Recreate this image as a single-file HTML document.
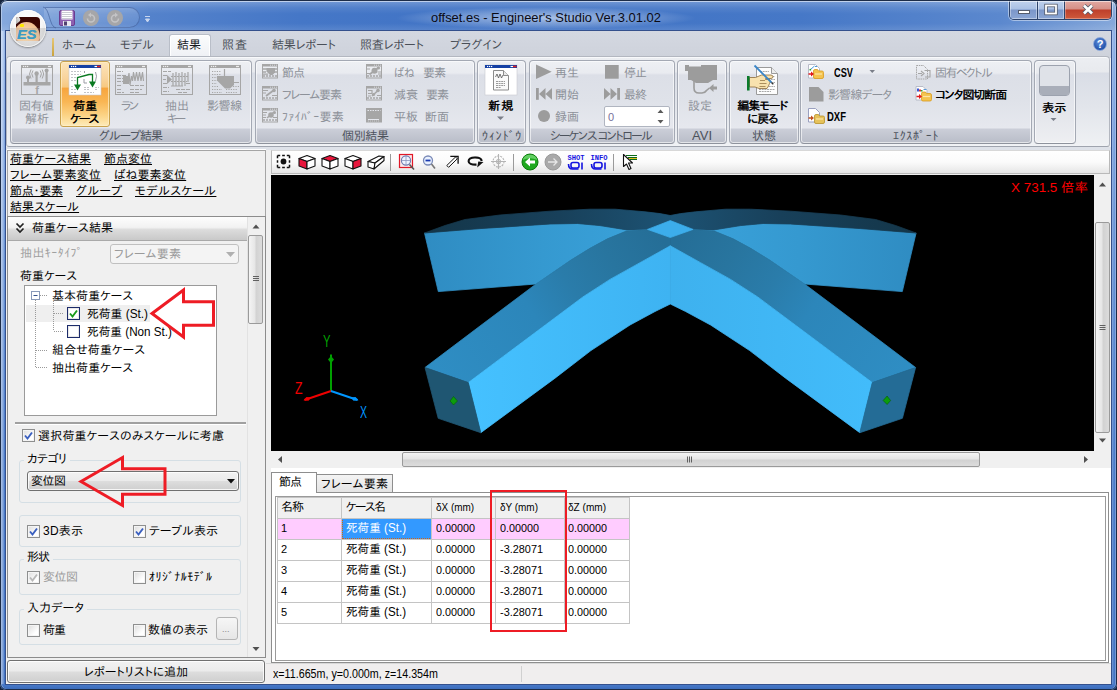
<!DOCTYPE html>
<html lang="ja">
<head>
<meta charset="utf-8">
<title>offset.es - Engineer's Studio Ver.3.01.02</title>
<style>
*{box-sizing:border-box;margin:0;padding:0}
html,body{width:1117px;height:690px;overflow:hidden;background:#16243c}
body{font-family:"Liberation Sans","IPAPGothic","IPAGothic","Noto Sans CJK JP",sans-serif;font-size:12px;color:#000;line-height:1}
.a{position:absolute}
.t{position:absolute;white-space:nowrap;line-height:14px;height:14px}
svg{position:absolute;overflow:visible}
#win{position:absolute;left:0;top:0;width:1117px;height:690px;border-radius:7px 7px 6px 6px;overflow:hidden;
 background:linear-gradient(90deg,#86a9dd 0,#6e96d5 60px,#5482cb 150px,#4577c7 300px,#4073c5 520px,#4678c7 800px,#5b88ce 1000px,#86a8da 1117px)}
#winedge{position:absolute;left:0;top:0;width:1117px;height:690px;border:1px solid #1c2c48;border-radius:7px 7px 6px 6px;box-shadow:inset 0 1px 0 rgba(255,255,255,.55),inset 1px 0 0 rgba(255,255,255,.35),inset -1px 0 0 rgba(255,255,255,.25);pointer-events:none}
.grp{position:absolute;top:60px;height:84px;border:1px solid #a4a9b4;border-bottom-color:#8e939d;border-radius:4px;background:linear-gradient(#eef0f4 0,#e9ebf0 12px,#dcdfe7 14px,#dfe2e9 40px,#e6e8ee 67px,#cbced8 68px,#b9bdc8 100%);box-shadow:inset 0 0 0 1px rgba(255,255,255,.6)}
.dis{color:#8d9199}
.u{text-decoration:underline}
.cb{position:absolute;width:13px;height:13px;border:1px solid #8e8f8f;background:linear-gradient(135deg,#dcdcdc,#fff 70%);box-shadow:inset 0 0 0 1px #f4f4f4}
.gb{position:absolute;border:1px solid #d5dfe5;border-radius:3px}
</style>
</head>
<body>
<div id="win">
<div class="a" style="left:1px;top:31px;width:5px;height:653px;background:linear-gradient(90deg,rgba(255,255,255,.15) 0,rgba(255,255,255,.4) 35%,rgba(255,255,255,0) 70%),linear-gradient(#9dbbea 0,#6f98d8 30%,#4c7cca 65%,#4475c4 100%)"></div>
<div class="a" style="left:1111px;top:31px;width:5px;height:653px;background:linear-gradient(90deg,rgba(255,255,255,.45) 0,rgba(255,255,255,.1) 40%,rgba(255,255,255,0) 70%),linear-gradient(#8fb0e6 0,#6a94d6 30%,#4c7cca 65%,#4475c4 100%)"></div>
<div class="a" style="left:1px;top:684px;width:1115px;height:5px;background:linear-gradient(#4a7ccb,#3b6cbb)"></div>
<div class="a" style="left:6px;top:31px;width:1105px;height:653px;background:#f0f0f0"></div>
<div class="a" style="left:0;top:0;width:1117px;height:31px;background:linear-gradient(rgba(255,255,255,.28) 0,rgba(255,255,255,.08) 25%,rgba(255,255,255,0) 45%,rgba(255,255,255,0) 75%,rgba(255,255,255,.12) 100%)"></div>
<div class="a" style="left:300px;top:3px;width:500px;height:26px;background:radial-gradient(ellipse 150px 11px at 246px 15px,rgba(255,255,255,.55),rgba(255,255,255,.25) 60%,rgba(255,255,255,0) 100%)"></div>
<div class="t" style="left:431px;top:11px;font-size:13px;color:#0a0a14;transform:scaleX(0.994);transform-origin:0 50%;">offset.es - Engineer's Studio Ver.3.01.02</div>
<div class="a" style="left:44px;top:7px;width:96px;height:21px;border:1px solid rgba(60,90,150,.55);border-radius:2px 11px 11px 2px;background:linear-gradient(rgba(255,255,255,.18),rgba(255,255,255,.05));border-left-color:transparent"></div>
<svg style="left:40px;top:5px" width="110" height="26" viewBox="0 0 110 26">
  <path d="M3 2 C10 3 9 22 16 23" fill="none" stroke="rgba(60,90,150,.6)" stroke-width="1"/>
  <rect x="19.5" y="5.500" width="15" height="15" rx="1.500" fill="#8e5fb0" stroke="#6a3d90"/>
  <rect x="21.500" y="5.500" width="11" height="9" fill="#fff"/>
  <path d="M22 7.500h10M22 9.500h10M22 11.500h10M22 13.500h10" stroke="#b4b4c0" stroke-width=".7"/>
  <rect x="23" y="16" width="8" height="5" fill="#e8e8f0"/><rect x="24" y="16.500" width="3" height="4" fill="#514070"/>
  <circle cx="51" cy="13" r="8" fill="#a6a6a8"/><circle cx="75" cy="13" r="8" fill="#a6a6a8"/>
  <path d="M47.500 13.500a3.500 3.500 0 1 0 3.500-3.500" fill="none" stroke="#c4c4c6" stroke-width="1.600"/><path d="M51 7.500l-3 2.500 3 2.500z" fill="#c4c4c6"/>
  <path d="M78.500 13.500a3.500 3.500 0 1 1-3.500-3.500" fill="none" stroke="#c4c4c6" stroke-width="1.600"/><path d="M75 7.500l3 2.500-3 2.500z" fill="#c4c4c6"/>
  <path d="M105 11.500h5M105.500 14h4l-2 3z" stroke="#c8d6ee" stroke-width="1" fill="#c8d6ee"/>
 </svg>
<div class="a" style="left:1009px;top:0;width:103px;height:20px;border:1px solid #2d436b;border-top:none;border-radius:0 0 5px 5px;overflow:hidden;box-shadow:0 0 0 1px rgba(255,255,255,.45)">
  <div class="a" style="left:0;top:0;width:28px;height:19px;background:linear-gradient(#c3d4ee 0,#a9c0e4 48%,#7b96c9 52%,#8ba6d4 100%);border-right:1px solid #2d436b;box-shadow:inset 0 0 0 1px rgba(255,255,255,.4)"></div>
  <div class="a" style="left:28px;top:0;width:27px;height:19px;background:linear-gradient(#c3d4ee 0,#a9c0e4 48%,#7b96c9 52%,#8ba6d4 100%);border-right:1px solid #2d436b;box-shadow:inset 0 0 0 1px rgba(255,255,255,.4)"></div>
  <div class="a" style="left:55px;top:0;width:47px;height:19px;background:linear-gradient(#e3aca6 0,#d68f86 48%,#bd3f2b 52%,#cf5a3c 100%);box-shadow:inset 0 0 0 1px rgba(255,255,255,.3)"></div>
  <svg style="left:0;top:0" width="102" height="19" viewBox="0 0 102 19">
   <rect x="8.500" y="10.500" width="11" height="3" fill="#fff" stroke="#555c6c"/>
   <rect x="36" y="5.500" width="10" height="8" fill="none" stroke="#555c6c" stroke-width="3.400"/>
   <rect x="36" y="5.500" width="10" height="8" fill="none" stroke="#fff" stroke-width="1.800"/>
   <path d="M74 5.500l8 8M82 5.500l-8 8" stroke="#555c6c" stroke-width="4.400"/>
   <path d="M74 5.500l8 8M82 5.500l-8 8" stroke="#fff" stroke-width="2.600"/>
  </svg>
 </div>
<div class="a" style="left:6px;top:31px;width:1105px;height:27px;background:linear-gradient(#d4d8e1,#ced2db)"></div>
<div class="a" style="left:52px;top:38px;width:2px;height:18px;background:linear-gradient(#e7c878,#c9a23c)"></div>
<div class="a" style="left:169px;top:34px;width:42px;height:24px;border:1px solid #b9bec8;border-bottom:none;border-radius:3px 3px 0 0;background:linear-gradient(#fbfcfd,#eef0f4);box-shadow:inset 0 0 0 1px #fff"></div>
<div class="t" style="left:62px;top:38px;color:#4a4f57;letter-spacing:0.44px;">ホーム</div>
<div class="t" style="left:120px;top:38px;color:#4a4f57;letter-spacing:-0.05px;">モデル</div>
<div class="t" style="left:177px;top:38px;color:#15181d;">結果</div>
<div class="t" style="left:222px;top:38px;color:#4a4f57;letter-spacing:1.00px;">照査</div>
<div class="t" style="left:272px;top:38px;color:#4a4f57;letter-spacing:-0.14px;">結果レポート</div>
<div class="t" style="left:360px;top:38px;color:#4a4f57;letter-spacing:-0.14px;">照査レポート</div>
<div class="t" style="left:450px;top:38px;color:#4a4f57;letter-spacing:0.16px;">プラグイン</div>
<div class="a" style="left:1093px;top:37px;width:14px;height:14px;border-radius:50%;background:radial-gradient(circle at 45% 35%,#5f8fdc,#1f4fa8 75%);border:1px solid #8aa6d8"><div class="a" style="left:0;top:0;width:12px;text-align:center;font:bold 11px/12px 'Liberation Sans',sans-serif;color:#fff">?</div></div>
<div class="a" style="left:6px;top:56px;width:1105px;height:91px;background:linear-gradient(#eceef2 0,#e8eaee 15px,#d9dde6 16px,#e2e5eb 50px,#eef0f3 86px,#f1f3f6 100%);border:1px solid #b3b7c0;border-bottom-color:#9fa4ae;border-radius:4px 4px 3px 3px;box-shadow:inset 0 1px 0 #f8f9fb;width:1104px"></div>
<div class="a" style="left:6px;top:147px;width:1105px;height:3px;background:#dee2e9"></div>
<div class="grp" style="left:10px;width:242px"></div>
<div class="t" style="left:99px;top:129px;color:#4c525c;letter-spacing:-0.98px;">グループ結果</div>
<div class="grp" style="left:255px;width:220px"></div>
<div class="t" style="left:342px;top:129px;color:#4c525c;letter-spacing:-0.33px;">個別結果</div>
<div class="grp" style="left:477px;width:49px"></div>
<div class="t" style="left:482px;top:129px;color:#4c525c;letter-spacing:0.80px;">ｳｨﾝﾄﾞｳ</div>
<div class="grp" style="left:529px;width:146px"></div>
<div class="t" style="left:550px;top:129px;color:#4c525c;letter-spacing:-1.51px;">シーケンス コントロール</div>
<div class="grp" style="left:677px;width:50px"></div>
<div class="t" style="left:692px;top:129px;color:#4c525c;transform:scaleX(1.084);transform-origin:0 50%;">AVI</div>
<div class="grp" style="left:729px;width:70px"></div>
<div class="t" style="left:752px;top:129px;color:#4c525c;">状態</div>
<div class="grp" style="left:800px;width:232px"></div>
<div class="t" style="left:893px;top:129px;color:#4c525c;letter-spacing:0.67px;">ｴｸｽﾎﾟｰﾄ</div>
<div class="grp" style="left:1034px;width:42px;background:linear-gradient(#eceef2 0,#e9ebef 12px,#dde0e8 14px,#e6e8ed 60px,#eeeff2 100%)"></div>
<div class="a" style="left:60px;top:61px;width:50px;height:66px;border:1px solid #c9a24e;border-radius:3px;background:linear-gradient(#fce4ba 0,#f9d49c 25%,#f7c981 39%,#f7a53e 41%,#f9b654 62%,#fcd68a 85%,#fdebba 100%);box-shadow:inset 0 0 0 1px rgba(255,240,200,.7)"></div>
<div class="t" style="left:19px;top:99px;color:#8d9199;letter-spacing:-0.50px;">固有値</div>
<div class="t" style="left:25px;top:112px;color:#8d9199;">解析</div>
<div class="t" style="left:73px;top:99px;text-shadow:.45px 0 0 currentColor;">荷重</div>
<div class="t" style="left:70px;top:112px;text-shadow:.45px 0 0 currentColor;letter-spacing:-1.82px;">ケース</div>
<div class="t" style="left:121px;top:99px;color:#8d9199;letter-spacing:-2.53px;">ラン</div>
<div class="t" style="left:165px;top:99px;color:#8d9199;">抽出</div>
<div class="t" style="left:167px;top:112px;color:#8d9199;letter-spacing:-2.97px;">キー</div>
<div class="t" style="left:207px;top:99px;color:#8d9199;letter-spacing:-0.50px;">影響線</div>
<div class="t" style="left:488px;top:99px;text-shadow:.45px 0 0 currentColor;letter-spacing:1.00px;">新規</div>
<div class="t" style="left:688px;top:99px;color:#8d9199;">設定</div>
<div class="t" style="left:737px;top:99px;text-shadow:.45px 0 0 currentColor;letter-spacing:-1.02px;">編集モード</div>
<div class="t" style="left:747px;top:112px;text-shadow:.45px 0 0 currentColor;letter-spacing:-0.95px;">に戻る</div>
<div class="t" style="left:1042px;top:101px;text-shadow:.45px 0 0 currentColor;">表示</div>
<div class="t" style="left:282px;top:66px;color:#8d9199;letter-spacing:-1.00px;">節点</div>
<div class="t" style="left:282px;top:88px;color:#8d9199;letter-spacing:-1.08px;">フレーム要素</div>
<div class="t" style="left:282px;top:110px;color:#8d9199;letter-spacing:0.29px;">ﾌｧｲﾊﾞｰ要素</div>
<div class="t" style="left:394px;top:66px;color:#8d9199;transform:scaleX(0.889);transform-origin:0 50%;">ばね</div>
<div class="t" style="left:423px;top:66px;color:#8d9199;letter-spacing:-1.00px;">要素</div>
<div class="t" style="left:394px;top:88px;color:#8d9199;">減衰</div>
<div class="t" style="left:426px;top:88px;color:#8d9199;letter-spacing:-1.00px;">要素</div>
<div class="t" style="left:394px;top:110px;color:#8d9199;">平板</div>
<div class="t" style="left:425px;top:110px;color:#8d9199;">断面</div>
<div class="t" style="left:555px;top:66px;color:#8d9199;">再生</div>
<div class="t" style="left:555px;top:88px;color:#8d9199;">開始</div>
<div class="t" style="left:555px;top:110px;color:#8d9199;">録画</div>
<div class="t" style="left:624px;top:66px;color:#8d9199;letter-spacing:-1.00px;">停止</div>
<div class="t" style="left:624px;top:88px;color:#8d9199;letter-spacing:-1.00px;">最終</div>
<div class="t" style="left:834px;top:66px;font-weight:bold;transform:scaleX(0.770);transform-origin:0 50%;">CSV</div>
<div class="t" style="left:935px;top:66px;color:#8d9199;letter-spacing:-1.51px;">固有ベクトル</div>
<div class="t" style="left:828px;top:88px;color:#8d9199;letter-spacing:-0.91px;">影響線データ</div>
<div class="t" style="left:935px;top:88px;text-shadow:.45px 0 0 currentColor;letter-spacing:-1.06px;">コンタ図切断面</div>
<div class="t" style="left:827px;top:110px;font-weight:bold;transform:scaleX(0.792);transform-origin:0 50%;">DXF</div>
<div class="a" style="left:604px;top:106px;width:66px;height:21px;border:1px solid #b0b5c0;border-radius:2px;background:#fff"></div>
<div class="t" style="left:608px;top:110px;font-size:11px;color:#77709a;">0</div>
<svg style="left:0;top:0" width="1117" height="150" viewBox="0 0 1117 150"><rect x="21.5" y="65.5" width="31" height="29" fill="none" stroke="#a6a6a6" stroke-width="1"/><rect x="21" y="65" width="32" height="3" fill="#a6a6a6"/><rect x="48" y="65.9" width="3" height="1.200" fill="#eee"/><rect x="23" y="65.9" width="1.200" height="1.200" fill="#eee"/><rect x="25" y="65.9" width="1.200" height="1.200" fill="#eee"/><rect x="27" y="65.9" width="1.200" height="1.200" fill="#eee"/><g fill="#a6a6a6" stroke="none"><rect x="23.5" y="82" width="27" height="3.500"/><rect x="27" y="78" width="2" height="5"/><circle cx="28" cy="77.5" r="2"/><rect x="35.5" y="74" width="2.200" height="9"/><circle cx="36.6" cy="73.5" r="2.200"/><rect x="45.5" y="71" width="2.200" height="12"/><circle cx="46.6" cy="70.5" r="2"/></g><g fill="none" stroke="#a6a6a6" stroke-width="1"><path d="M33 70.5q-2.500 3 0 7M31 69.5q-3 4.500 0 9M40.2 70.5q2.500 3 0 7M42.2 69.5q3 4.500 0 9"/></g><text x="37" y="93.5" font-size="11" font-weight="bold" fill="#a6a6a6" text-anchor="middle" font-family="Liberation Sans,sans-serif">f</text><rect x="69" y="65" width="32" height="30" fill="#fff" stroke="#c8cad0" stroke-width=".6"/><rect x="69" y="65" width="32" height="3" fill="#1540a4"/><rect x="97" y="65.7" width="3.500" height="1.600" fill="#e02020"/><rect x="94.5" y="65.9" width="2.500" height="1.200" fill="#fff"/><rect x="71" y="65.9" width="1.200" height="1.200" fill="#fff"/><rect x="73" y="65.9" width="1.200" height="1.200" fill="#fff"/><rect x="75" y="65.9" width="1.200" height="1.200" fill="#fff"/><g stroke="#c2c4c8" stroke-width="1" stroke-dasharray="2 1"><path d="M71 71.5h10M71 74.5h10M71 77.5h5M71 80.5h5M71 86.5h3M71 89.5h5M71 92.5h5M84 87.5h5M84 89.5h6M84 92.5h10M95 87.5h4M95 89.5h3"/></g><path d="M84.5 71v2M95.5 72q2 4 0 9M84 79v4h3" fill="none" stroke="#9a9ca4" stroke-width="1"/><path d="M77.5 86V77.5L89 74.5H92.5V83" fill="none" stroke="#0b7a22" stroke-width="1.300"/><path d="M74 84.5h7l-3.500 6zM89 81.5h7l-3.500 6z" fill="#0b7a22"/><rect x="115.5" y="65.5" width="31" height="29" fill="none" stroke="#a6a6a6" stroke-width="1"/><rect x="115" y="65" width="32" height="3" fill="#a6a6a6"/><rect x="142" y="65.9" width="3" height="1.200" fill="#eee"/><rect x="117" y="65.9" width="1.200" height="1.200" fill="#eee"/><rect x="119" y="65.9" width="1.200" height="1.200" fill="#eee"/><rect x="121" y="65.9" width="1.200" height="1.200" fill="#eee"/><g stroke="#a6a6a6" stroke-width="1.200" fill="none"><path d="M117 71.5h6M117 75.5h9M117 78.5h7M117 81.5h8M117 85.5h5M117 89.5h5M117 92.5h7M130 85.5h15M130 89.5h12M130 92.5h10" stroke-dasharray="4 1"/><path d="M123 79h5l1-6 1 12 1.500-9 1 5 1-9 1.500 9 1.500-9 1.500 9 1.500-9 1.500 9 1.500-9 1 9"/></g><rect x="123" y="76" width="6" height="8" fill="#a6a6a6"/><rect x="161.5" y="65.5" width="31" height="29" fill="none" stroke="#a6a6a6" stroke-width="1"/><rect x="161" y="65" width="32" height="3" fill="#a6a6a6"/><rect x="188" y="65.9" width="3" height="1.200" fill="#eee"/><rect x="163" y="65.9" width="1.200" height="1.200" fill="#eee"/><rect x="165" y="65.9" width="1.200" height="1.200" fill="#eee"/><rect x="167" y="65.9" width="1.200" height="1.200" fill="#eee"/><g stroke="#a6a6a6" stroke-width="1.200" fill="none"><path d="M163 71.5h8M163 75.5h5M163 79.5h3M163 83.5h5M163 87.5h6M163 91.5h6M176 89.5h14M178 92.5h10M186 83.5h5" stroke-dasharray="4 1"/><path d="M171 86h12M173 73v13M176 72v14M179 73v13M182 72v14M185 73v13M188 72v10"/><path d="M171 76.5h18M171 81.5h16" stroke-dasharray="2 1"/></g><path d="M167 75l5 4.500-5 4.500z" fill="#a6a6a6"/><rect x="209.5" y="65.5" width="31" height="29" fill="none" stroke="#a6a6a6" stroke-width="1"/><rect x="209" y="65" width="32" height="3" fill="#a6a6a6"/><rect x="236" y="65.9" width="3" height="1.200" fill="#eee"/><rect x="211" y="65.9" width="1.200" height="1.200" fill="#eee"/><rect x="213" y="65.9" width="1.200" height="1.200" fill="#eee"/><rect x="215" y="65.9" width="1.200" height="1.200" fill="#eee"/><g stroke="#a6a6a6" stroke-width="1.200" stroke-dasharray="1.200 1.200"><path d="M212 71.5h9M212 74.5h9M212 77.5h5M212 80.5h5M212 83.5h5M212 86.5h7M212 89.5h10M212 92.5h10M226 89.5h12M226 92.5h12M233 86.5h6"/></g><path d="M224.5 69v8M234 82.5h5" stroke="#a6a6a6" stroke-width="1.200"/><path d="M217 76h17v9l-4 3.500h-5l-8-8z" fill="#a6a6a6"/><rect x="262.5" y="64.5" width="15" height="13.500" fill="none" stroke="#a6a6a6" stroke-width="1"/><rect x="262" y="64" width="16" height="2.500" fill="#a6a6a6"/><path d="M270 65.2h7" stroke="#e4e6ec" stroke-width=".8" stroke-dasharray="1 1"/><path d="M263 76h14" stroke="#a6a6a6" stroke-width="1.600" stroke-dasharray="2 1"/><path d="M263 69h4M263 72h3M263 74.2h5M273 69h4M273 72h4" stroke="#a6a6a6" stroke-width="1.300"/><path d="M266.5 68h8.500v4.500l-2.500 2.500h-2.500l-3.500-3.500z" fill="#a6a6a6"/><rect x="366.5" y="64.5" width="15" height="13.500" fill="none" stroke="#a6a6a6" stroke-width="1"/><rect x="366" y="64" width="16" height="2.500" fill="#a6a6a6"/><path d="M374 65.2h7" stroke="#e4e6ec" stroke-width=".8" stroke-dasharray="1 1"/><path d="M367 76h14" stroke="#a6a6a6" stroke-width="1.600" stroke-dasharray="2 1"/><path d="M367 69h3M367 73.5h3M377.5 72h3.500M378 74h3" stroke="#a6a6a6" stroke-width="1.200"/><path d="M369.5 74.5l9-7" stroke="#a6a6a6" stroke-width="1.800"/><circle cx="374.5" cy="70.8" r="3" fill="#a6a6a6"/><circle cx="378.5" cy="68" r="1.600" fill="#a6a6a6"/><rect x="262.5" y="86.5" width="15" height="13.500" fill="none" stroke="#a6a6a6" stroke-width="1"/><rect x="262" y="86" width="16" height="2.500" fill="#a6a6a6"/><path d="M270 87.2h7" stroke="#e4e6ec" stroke-width=".8" stroke-dasharray="1 1"/><path d="M263 98h14" stroke="#a6a6a6" stroke-width="1.600" stroke-dasharray="2 1"/><path d="M263 90.5h5M263 93h3M272 95.5h5" stroke="#a6a6a6" stroke-width="1.200"/><path d="M266 96l8-6" stroke="#a6a6a6" stroke-width="1.800"/><circle cx="274" cy="90.5" r="1.800" fill="#a6a6a6"/><rect x="366.5" y="86.5" width="15" height="13.500" fill="none" stroke="#a6a6a6" stroke-width="1"/><rect x="366" y="86" width="16" height="2.500" fill="#a6a6a6"/><path d="M374 87.2h7" stroke="#e4e6ec" stroke-width=".8" stroke-dasharray="1 1"/><path d="M367 98h14" stroke="#a6a6a6" stroke-width="1.600" stroke-dasharray="2 1"/><path d="M368 90.5h4v3h-4M368 96h3M377 95.5h4" stroke="#a6a6a6" stroke-width="1.200" fill="none"/><path d="M372 96l6-5.500" stroke="#a6a6a6" stroke-width="1.600"/><circle cx="378" cy="90.5" r="1.800" fill="#a6a6a6"/><circle cx="373.5" cy="94.5" r="1.600" fill="#a6a6a6"/><rect x="262.5" y="108.5" width="15" height="13.500" fill="none" stroke="#a6a6a6" stroke-width="1"/><rect x="262" y="108" width="16" height="2.500" fill="#a6a6a6"/><path d="M270 109.2h7" stroke="#e4e6ec" stroke-width=".8" stroke-dasharray="1 1"/><path d="M263 120h14" stroke="#a6a6a6" stroke-width="1.600" stroke-dasharray="2 1"/><path d="M263 112.5h4M263 115h3M263 117.5h3M273 117.5h4" stroke="#a6a6a6" stroke-width="1.200"/><path d="M267 118l7-6" stroke="#a6a6a6" stroke-width="1.600"/><circle cx="271" cy="115" r="2.800" fill="#a6a6a6"/><circle cx="274.5" cy="112.5" r="1.500" fill="#a6a6a6"/><rect x="366" y="108" width="16" height="14.500" fill="#a6a6a6"/><path d="M367.5 110.5h13" stroke="#e4e6ec" stroke-width="1" stroke-dasharray="1.500 1"/><path d="M368 119.5h11" stroke="#e4e6ec" stroke-width="1"/><path d="M368 121h12" stroke="#e4e6ec" stroke-width=".6" stroke-dasharray="1 1"/><rect x="485" y="65" width="32" height="30" fill="#fff" stroke="#c8cad0" stroke-width=".6"/><rect x="485" y="65" width="32" height="3" fill="#1540a4"/><rect x="513" y="65.7" width="3.500" height="1.600" fill="#e02020"/><rect x="510.5" y="65.9" width="2.500" height="1.200" fill="#fff"/><rect x="487" y="65.9" width="1.200" height="1.200" fill="#fff"/><rect x="489" y="65.9" width="1.200" height="1.200" fill="#fff"/><rect x="491" y="65.9" width="1.200" height="1.200" fill="#fff"/><path d="M493.5 70.5h10l5 5v14.500h-15z" fill="#fafafa" stroke="#8c8c8c" stroke-width="1"/><path d="M503.5 70.5v5h5" fill="#e8e8e8" stroke="#8c8c8c" stroke-width="1"/><path d="M495.5 77l1.500-3 1.500 4 1.500-4 1.500 4 1.500-3" fill="none" stroke="#555" stroke-width=".8"/><path d="M496 81.5h9M496 83.5h9M496 85.5h9M496 87.5h5" stroke="#9a9a9a" stroke-width="1" stroke-dasharray="2 .6"/><path d="M497 116.500h7l-3.500 3.500z" fill="#7a7e88"/><g fill="#9c9c9c"><path d="M536 64.500v14.500l15.700-7.250z"/><rect x="605" y="65" width="13.700" height="13.700"/><rect x="536" y="88" width="2.800" height="11.800"/><path d="M545.500 88v11.800l-6.500-5.900zM552 88v11.800l-6.500-5.900z"/><rect x="617.200" y="88" width="2.800" height="11.800"/><path d="M604 88v11.800l6.500-5.900zM610.500 88v11.800l6.500-5.900z"/><circle cx="544" cy="116" r="6"/></g><path d="M657.500 113l3-3.500 3 3.500zM657.500 120l3 3.500 3-3.500z" fill="#5a5a5a"/><g fill="#9c9c9c"><path d="M685 65h4v1.500h12v-1.500h16v15h-4l-5 3h-12l-5-3h-3v-9h-3z"/><path d="M709 88l4.500-4v2.500h3.500v3h-3.500v2.500z"/></g><path d="M694 81v7q0 5 5 5h3q3 0 4.500-2.500l3-2.500" fill="none" stroke="#9c9c9c" stroke-width="1.600"/><path d="M756.500 67.500h15l6 6v21h-21z" fill="#fdfdfd" stroke="#9a9a9a" stroke-width="1"/><path d="M771.500 67.500v6h6" fill="#ececec" stroke="#9a9a9a" stroke-width="1"/><path d="M760 71.500h9M767 76.500h8M768 79.500h7M768 82.500h7M766 86.500h9M759 89.500h16M759 91.500h12" stroke="#a8a8a8" stroke-width="1" stroke-dasharray="2 .7"/><path d="M749.500 77.500h6l6-2.500h9.500q2 .3 2 1.800t-2 1.700h-5.500v1h3.500q1.500 .5 1.500 2l-1 2-1 2.500-1.500 2.500h-8l-4-1.500h-5.500z" fill="#f8e2ae" stroke="#8a6a3a" stroke-width=".8"/><path d="M760 80.500h5M759.500 83.500h7M759.500 86.500h6" stroke="#8a6a3a" stroke-width=".7" fill="none"/><rect x="747" y="76" width="2.600" height="14.500" fill="#0a7a2a"/><path d="M754.500 65.500l17 17" stroke="#3a86c8" stroke-width="1.800"/><path d="M771.500 82.500l1.800 1.800" stroke="#333" stroke-width="1.400"/><path d="M808.5 64.5h7l4 4v9.500h-11z" fill="#fff" stroke="#b8bcc8" stroke-width="1"/><path d="M810.500 69.500l4-3.500M815 66.500h2" stroke="#4a9ad8" stroke-width="1"/><circle cx="810.300" cy="69.700" r=".9" fill="#2a9a3a"/><path d="M813.5 71q0-1.500 1.500-1.500h2.500l1 1.500h3.500q1.500 0 1.500 1.500v4.500q0 1.500-1.500 1.500h-7q-1.500 0-1.500-1.500z" fill="#f4c34e" stroke="#d99a1c" stroke-width=".8"/><path d="M815.0 74h7" stroke="#fbe6a8" stroke-width="1.200"/><path d="M808.5 74h3" stroke="#e0181c" stroke-width="1.500"/><path d="M811.0 71.5l3 2.500-3 2.500z" fill="#e0181c"/><path d="M809 87h9.500l5 5v9.500h-14.500z" fill="#9c9c9c"/><path d="M808.5 108.5h7l4 4v9.500h-11z" fill="#fff" stroke="#9aa0c0" stroke-width="1"/><path d="M814.5 116q0-1.500 1.500-1.500h2.500l1 1.500h3.500q1.500 0 1.500 1.500v4.500q0 1.500-1.500 1.500h-7q-1.500 0-1.500-1.500z" fill="#e6c25a" stroke="#b8922a" stroke-width=".8"/><path d="M816.0 119h7" stroke="#fbe6a8" stroke-width="1.200"/><path d="M808.5 118h3" stroke="#c0501c" stroke-width="1.500"/><path d="M811.0 115.5l3 2.500-3 2.500z" fill="#c0501c"/><path d="M916.500 65.500h7l4 4v9.500h-11z" fill="none" stroke="#a6a6a6" stroke-width="1" stroke-dasharray="1.500 .8"/><path d="M918 73.500h4M921 71l3 2.500-3 2.500M924.500 70.500h5.500v6.500h-5" fill="none" stroke="#a6a6a6" stroke-width="1.100"/><path d="M916.0 86.5h7l4 4v9.500h-11z" fill="#fff" stroke="#b8bcc8" stroke-width="1"/><rect x="917" y="88.500" width="2" height="3" fill="#3a5ad8"/><rect x="919" y="89.500" width="2" height="2" fill="#e03030"/><rect x="921" y="90" width="1.500" height="1.500" fill="#30a030"/><path d="M923.500 89.500h3" stroke="#5a9ad8"/><path d="M921.5 93.5q0-1.500 1.500-1.500h2.500l1 1.500h3.500q1.500 0 1.500 1.500v4.500q0 1.500-1.500 1.500h-7q-1.500 0-1.500-1.500z" fill="#f4c34e" stroke="#d99a1c" stroke-width=".8"/><path d="M923.0 96.5h7" stroke="#fbe6a8" stroke-width="1.200"/><path d="M916.5 96.5h3" stroke="#e0181c" stroke-width="1.500"/><path d="M919.0 94.0l3 2.500-3 2.500z" fill="#e0181c"/><path d="M869.500 70h5.500l-2.750 3z" fill="#7a7e88"/><rect x="1039.500" y="65.500" width="30" height="30" rx="3.500" fill="#dfe2e8" stroke="#9ca2ae"/><path d="M1040 86h29v6.500q0 2.500-2.500 2.500h-24q-2.500 0-2.500-2.500z" fill="#a9aeb9"/><path d="M1050.500 118h6l-3 3z" fill="#7a7e88"/></svg>
<div class="a" style="left:7px;top:150px;width:259px;height:66px;background:#f0f0f0;border:1px solid #a5a5a5;border-bottom:none;box-shadow:0 -1px 0 #fff"></div>
<div class="t" style="left:10px;top:152px;letter-spacing:0.06px;text-decoration:underline;">荷重ケース結果</div>
<div class="t" style="left:104px;top:152px;text-decoration:underline;">節点変位</div>
<div class="t" style="left:10px;top:168px;letter-spacing:0.23px;text-decoration:underline;">フレーム要素変位</div>
<div class="t" style="left:114px;top:168px;letter-spacing:0.19px;text-decoration:underline;">ばね要素変位</div>
<div class="t" style="left:10px;top:184px;letter-spacing:-0.25px;text-decoration:underline;">節点・要素</div>
<div class="t" style="left:76px;top:184px;letter-spacing:0.37px;text-decoration:underline;">グループ</div>
<div class="t" style="left:135px;top:184px;letter-spacing:0.40px;text-decoration:underline;">モデルスケール</div>
<div class="t" style="left:10px;top:200px;letter-spacing:0.09px;text-decoration:underline;">結果スケール</div>
<div class="a" style="left:7px;top:216px;width:259px;height:442px;background:#f0f0f0;border:1px solid #8c8c8c"></div>
<div class="a" style="left:8px;top:217px;width:239px;height:24px;background:linear-gradient(#fdfdfd 0,#f2f2f2 45%,#dcdcdc 55%,#c9c9c9 100%);border-bottom:1px solid #a9a9a9"></div>
<svg style="left:15px;top:222px" width="10" height="12" viewBox="0 0 10 12"><path d="M1.500 1.500l3.500 3.500 3.500-3.500M1.500 6.500l3.500 3.500 3.500-3.500" fill="none" stroke="#222" stroke-width="1.700"/></svg>
<div class="t" style="left:32px;top:221px;letter-spacing:0.06px;">荷重ケース結果</div>
<div class="a" style="left:247px;top:217px;width:18px;height:440px;background:#f0f0f0;border-left:1px solid #e2e2e2"></div>
<div class="a" style="left:248px;top:235px;width:15px;height:89px;border:1px solid #9a9a9a;border-radius:2px;background:linear-gradient(90deg,#f4f4f4 0,#e6e6e6 45%,#d2d2d2 55%,#dcdcdc 100%)"></div>
<svg style="left:248px;top:217px" width="16" height="440" viewBox="0 0 16 440"><path d="M4.500 11.500l3.500-4 3.500 4z" fill="#505050"/><path d="M4.500 430l3.500 4 3.500-4z" fill="#505050"/><path d="M5 59.500h6M5 61.500h6M5 63.500h6" stroke="#606060" stroke-width="1"/></svg>
<div class="t" style="left:20px;top:246px;color:#a0a0a0;letter-spacing:0.43px;">抽出ｷｰﾀｲﾌﾟ</div>
<div class="a" style="left:110px;top:244px;width:129px;height:20px;border:1px solid #c0c0c0;border-radius:3px;background:#f4f4f4"></div>
<div class="t" style="left:114px;top:247px;color:#9a9a9a;letter-spacing:0.32px;">フレーム要素</div>
<svg style="left:226px;top:252px" width="9" height="5" viewBox="0 0 9 5"><path d="M0 0h9l-4.500 5z" fill="#b0b0b0"/></svg>
<div class="t" style="left:20px;top:269px;letter-spacing:0.09px;">荷重ケース</div>
<div class="a" style="left:24px;top:285px;width:193px;height:131px;border:1px solid #9a9a9a;background:#fff"></div>
<div class="a" style="left:26px;top:305px;width:124px;height:17px;background:#efefef"></div>
<svg style="left:0;top:0" width="270" height="420" viewBox="0 0 270 420"><g stroke="#9a9a9a" stroke-width="1" stroke-dasharray="1 1" fill="none"><path d="M35.500 300v68M36 350.500h11M36 367.500h11M40 295.500h8M53.500 301v30M54 313.500h9M54 331.500h9"/></g><rect x="31.500" y="291.500" width="8" height="8" fill="#fff" stroke="#8a9ab8"/><path d="M33.500 295.500h4" stroke="#35508a"/></svg>
<div class="t" style="left:52px;top:289px;letter-spacing:0.06px;">基本荷重ケース</div>
<div class="a" style="left:67px;top:307px;width:13px;height:13px;border:1px solid #1c2b6a;background:#fff;box-shadow:inset 0 0 0 1px #e8e8e8"></div>
<svg style="left:67px;top:307px" width="13" height="13" viewBox="0 0 13 13"><path d="M3 6.500l2.500 3 4.500-6" fill="none" stroke="#1a9a1a" stroke-width="1.900"/></svg>
<div class="t" style="left:87px;top:307px;transform:scaleX(0.984);transform-origin:0 50%;">死荷重 (St.)</div>
<div class="a" style="left:67px;top:325px;width:13px;height:13px;border:1px solid #1c2b6a;background:#fff;box-shadow:inset 0 0 0 1px #e8e8e8"></div>
<div class="t" style="left:87px;top:325px;transform:scaleX(0.973);transform-origin:0 50%;">死荷重 (Non St.)</div>
<div class="t" style="left:52px;top:343px;letter-spacing:0.14px;">組合せ荷重ケース</div>
<div class="t" style="left:52px;top:361px;letter-spacing:0.06px;">抽出荷重ケース</div>
<svg style="left:0;top:0" width="300" height="690" viewBox="0 0 300 690"><path d="M152 313.5 L183.5 290.0 L183.5 301.8 L213.5 301.8 L213.5 325.2 L183.5 325.2 L183.5 337.0Z" fill="none" stroke="#ee1c25" stroke-width="3" stroke-linejoin="miter"/></svg>
<div class="a" style="left:15px;top:422px;width:231px;height:3px;background:#a0a0a0;border-bottom:1px solid #fff"></div>
<div class="cb" style="left:22px;top:429px"></div>
<svg style="left:22px;top:429px" width="13" height="13" viewBox="0 0 13 13"><path d="M3 6.500l2.500 3 4.500-6" fill="none" stroke="#3a5fbf" stroke-width="1.900"/></svg>
<div class="t" style="left:38px;top:429px;letter-spacing:0.20px;">選択荷重ケースのみスケールに考慮</div>
<div class="gb" style="left:19px;top:460px;width:222px;height:43px"></div>
<div class="a" style="left:24px;top:451px;width:46px;height:14px;background:#f0f0f0"></div>
<div class="t" style="left:27px;top:452px;letter-spacing:-0.55px;">カテゴリ</div>
<div class="a" style="left:27px;top:471px;width:212px;height:20px;border:1px solid #707070;border-radius:3px;background:linear-gradient(#f2f2f2 0,#ebebeb 48%,#dddddd 52%,#cfcfcf 100%);box-shadow:inset 0 0 0 1px rgba(255,255,255,.8)"></div>
<div class="t" style="left:31px;top:474px;letter-spacing:-0.50px;">変位図</div>
<svg style="left:227px;top:479px" width="8" height="5" viewBox="0 0 8 5"><path d="M0 0h8l-4 4.500z" fill="#111"/></svg>
<svg style="left:0;top:0" width="300" height="690" viewBox="0 0 300 690"><path d="M81 481.5 L122.5 457.5 L122.5 468.8 L165 468.8 L165 494.2 L122.5 494.2 L122.5 505.5Z" fill="none" stroke="#ee1c25" stroke-width="3" stroke-linejoin="miter"/></svg>
<div class="gb" style="left:19px;top:515px;width:222px;height:32px"></div>
<div class="cb" style="left:27px;top:525px"></div>
<svg style="left:27px;top:525px" width="13" height="13" viewBox="0 0 13 13"><path d="M3 6.500l2.500 3 4.500-6" fill="none" stroke="#3a5fbf" stroke-width="1.900"/></svg>
<div class="t" style="left:43px;top:524px;letter-spacing:0.22px;">3D表示</div>
<div class="cb" style="left:133px;top:525px"></div>
<svg style="left:133px;top:525px" width="13" height="13" viewBox="0 0 13 13"><path d="M3 6.500l2.500 3 4.500-6" fill="none" stroke="#3a5fbf" stroke-width="1.900"/></svg>
<div class="t" style="left:149px;top:524px;letter-spacing:0.05px;">テーブル表示</div>
<div class="gb" style="left:19px;top:559px;width:222px;height:36px"></div>
<div class="a" style="left:24px;top:551px;width:29px;height:14px;background:#f0f0f0"></div>
<div class="t" style="left:27px;top:550px;letter-spacing:-1.00px;">形状</div>
<div class="cb" style="left:27px;top:571px"></div>
<svg style="left:27px;top:571px" width="13" height="13" viewBox="0 0 13 13"><path d="M3 6.500l2.500 3 4.500-6" fill="none" stroke="#b8b8b8" stroke-width="1.900"/></svg>
<div class="t" style="left:43px;top:570px;color:#9a9a9a;letter-spacing:-0.50px;">変位図</div>
<div class="cb" style="left:133px;top:571px"></div>
<div class="t" style="left:149px;top:570px;letter-spacing:0.44px;">ｵﾘｼﾞﾅﾙﾓﾃﾞﾙ</div>
<div class="gb" style="left:19px;top:609px;width:222px;height:36px"></div>
<div class="a" style="left:24px;top:601px;width:63px;height:14px;background:#f0f0f0"></div>
<div class="t" style="left:27px;top:601px;letter-spacing:0.12px;">入力データ</div>
<div class="cb" style="left:27px;top:624px"></div>
<div class="t" style="left:43px;top:623px;letter-spacing:-1.00px;">荷重</div>
<div class="cb" style="left:133px;top:624px"></div>
<div class="t" style="left:148px;top:623px;letter-spacing:0.09px;">数値の表示</div>
<div class="a" style="left:216px;top:617px;width:22px;height:23px;border:1px solid #b4b4b4;border-radius:3px;background:linear-gradient(#f6f6f6,#e6e6e6)"></div>
<div class="t" style="left:222px;top:622px;font-size:9px;color:#8a8a8a;">...</div>
<div class="a" style="left:7px;top:660px;width:258px;height:23px;border:1px solid #707070;border-radius:3px;background:linear-gradient(#f2f2f2 0,#ebebeb 48%,#dddddd 52%,#cfcfcf 100%);box-shadow:inset 0 0 0 1px rgba(255,255,255,.8)"></div>
<div class="t" style="left:84px;top:665px;">レポートリストに追加</div>
<div class="a" style="left:271px;top:150px;width:839px;height:24px;background:linear-gradient(#ffffff 0,#fbfbfb 50%,#e6e6e6 100%);border:1px solid #b9b9b9;border-top-color:#d8d8d8"></div>
<svg style="left:0;top:0" width="1117" height="180" viewBox="0 0 1117 180"><path d="M277.500 155.500h12M289.500 155.500v12M289.500 167.500h-12M277.500 167.500v-12" fill="none" stroke="#111" stroke-width="1.500" stroke-dasharray="2.700 1.950 2.700 1.950 2.700 0"/><circle cx="283.500" cy="161.500" r="2.900" fill="#111"/><path d="M299 158.5L307 155.5L315 158.5L307 161.5Z" fill="#fff" stroke="#111" stroke-width="1.100" stroke-linejoin="round"/><path d="M299 158.5L307 161.5V169L299 166Z" fill="#e8163c" stroke="#111" stroke-width="1.100" stroke-linejoin="round"/><path d="M315 158.5L307 161.5V169L315 166Z" fill="#fff" stroke="#111" stroke-width="1.100" stroke-linejoin="round"/><path d="M322 158.5L330 155.5L338 158.5L330 161.5Z" fill="#e8163c" stroke="#111" stroke-width="1.100" stroke-linejoin="round"/><path d="M322 158.5L330 161.5V169L322 166Z" fill="#fff" stroke="#111" stroke-width="1.100" stroke-linejoin="round"/><path d="M338 158.5L330 161.5V169L338 166Z" fill="#fff" stroke="#111" stroke-width="1.100" stroke-linejoin="round"/><path d="M345 158.5L353 155.5L361 158.5L353 161.5Z" fill="#fff" stroke="#111" stroke-width="1.100" stroke-linejoin="round"/><path d="M345 158.5L353 161.5V169L345 166Z" fill="#fff" stroke="#111" stroke-width="1.100" stroke-linejoin="round"/><path d="M361 158.5L353 161.5V169L361 166Z" fill="#e8163c" stroke="#111" stroke-width="1.100" stroke-linejoin="round"/><g fill="#fff" stroke="#111" stroke-width="1.100" stroke-linejoin="round"><path d="M368 161.500l11-5.500 5 .5-9 6.500z"/><path d="M368 161.500l7 1.500-1 6-6-2z"/><path d="M375 163l9-6.500v4l-10 8.500z"/></g><path d="M390.500 154v17M513.500 154v17M613.500 154v17" stroke="#9a9a9a" stroke-width="1"/><rect x="399.500" y="154.500" width="13" height="13" fill="#fde8e8" stroke="#e01828" stroke-width="1.200"/><circle cx="406" cy="160.500" r="4.600" fill="#eef4ff" stroke="#6a7ab0" stroke-width="1.100"/><path d="M406 156v9M401.500 160.500h9" stroke="#8a96c0" stroke-width=".8"/><path d="M409.500 164.500l4.500 5" stroke="#555" stroke-width="1.600"/><circle cx="428" cy="160.500" r="4.500" fill="#eaf2ff" stroke="#7a8ab8" stroke-width="1.300"/><path d="M425.500 160.500h5" stroke="#1a3ab0" stroke-width="1.800"/><path d="M431.500 164l3.500 4.500" stroke="#777" stroke-width="1.600"/><path d="M446.800 165.500L455.500 157L457.300 158.800L448.600 167.300Z" fill="#fff" stroke="#111" stroke-width="1"/><path d="M450.300 156.300H458.100V163.800" fill="none" stroke="#111" stroke-width="1.300"/><path d="M472 157.600q4-1.300 8 0" fill="none" stroke="#b0b0b0" stroke-width="1"/><path d="M476.500 164.600Q468.600 164.800 468.600 161.200Q468.600 157.500 475 157.500Q481.600 157.500 481.600 161" fill="none" stroke="#111" stroke-width="2.100"/><path d="M478.300 161.600l5.200 .4-6.300 5.600z" fill="#111"/><g fill="none" stroke="#b4b4b4" stroke-width="1.100"><circle cx="498.500" cy="161.500" r="5.500" stroke-dasharray="2 1"/><circle cx="498.500" cy="161.500" r="2"/><path d="M498.500 154v15M491 161.500h15"/></g><circle cx="530" cy="162" r="8" fill="#1ea81e" stroke="#0c7a0c"/><path d="M522.500 160a8 8 0 0 1 15 0q-7.500-3.500-15 0z" fill="#7fe07f" opacity=".7"/><path d="M525 162l5-4.500v3h5v3h-5v3z" fill="#fff"/><circle cx="553" cy="162" r="8" fill="#a9a9a9" stroke="#9a9a9a"/><path d="M548 162h9M553.500 158.500l3.500 3.500-3.500 3.500" fill="none" stroke="#e6e6e6" stroke-width="1.300"/><text x="567.5" y="160" font-size="7.500" font-weight="bold" fill="#1414e0" font-family="Liberation Mono,monospace" textLength="17" lengthAdjust="spacingAndGlyphs">SHOT</text><g fill="none" stroke="#1414e0" stroke-width="1.600"><rect x="571.0" y="162.500" width="8" height="5.500" rx="2"/><path d="M568.5 164q0 5 4 5h6M582.0 162.5v7"/></g><text x="590.5" y="160" font-size="7.500" font-weight="bold" fill="#1414e0" font-family="Liberation Mono,monospace" textLength="17" lengthAdjust="spacingAndGlyphs">INFO</text><g fill="none" stroke="#1414e0" stroke-width="1.600"><rect x="594.0" y="162.500" width="8" height="5.500" rx="2"/><path d="M591.5 164q0 5 4 5h6M605.0 162.5v7"/></g><path d="M626 155.500h11M628 157.500h9M630 159.500h7" stroke="#0a6a1a" stroke-width="1.200"/><path d="M628 158.500h9" stroke="#e0c020" stroke-width="1"/><path d="M623.500 154.500v12l3-2.500 2.500 5.500 2-1-2.500-5.500h4z" fill="#fff" stroke="#111" stroke-width="1.100" stroke-linejoin="round"/></svg>
<div class="a" style="left:271px;top:175px;width:823px;height:276px;background:#000"></div>
<svg style="left:0;top:0" width="1117" height="690" viewBox="0 0 1117 690">
<defs>
<linearGradient id="gBL" gradientUnits="userSpaceOnUse" x1="424" y1="0" x2="660" y2="0"><stop offset="0" stop-color="#2f8cc2"/><stop offset=".5" stop-color="#3599d0"/><stop offset="1" stop-color="#3aa3dc"/></linearGradient>
<linearGradient id="gBR" gradientUnits="userSpaceOnUse" x1="917" y1="0" x2="680" y2="0"><stop offset="0" stop-color="#2f8cc2"/><stop offset=".5" stop-color="#3599d0"/><stop offset="1" stop-color="#3aa3dc"/></linearGradient>
<linearGradient id="gTL" gradientUnits="userSpaceOnUse" x1="424" y1="0" x2="670" y2="0"><stop offset="0" stop-color="#143649"/><stop offset=".55" stop-color="#18405a"/><stop offset="1" stop-color="#1d5374"/></linearGradient>
<linearGradient id="gTR" gradientUnits="userSpaceOnUse" x1="917" y1="0" x2="670" y2="0"><stop offset="0" stop-color="#143649"/><stop offset=".55" stop-color="#18405a"/><stop offset="1" stop-color="#1d5374"/></linearGradient>
<linearGradient id="gFLt" gradientUnits="userSpaceOnUse" x1="430" y1="380" x2="660" y2="235"><stop offset="0" stop-color="#2f8ec4"/><stop offset=".45" stop-color="#2c86ba"/><stop offset=".62" stop-color="#2a7caa"/><stop offset=".8" stop-color="#28759f"/><stop offset="1" stop-color="#256e97"/></linearGradient>
<linearGradient id="gFRt" gradientUnits="userSpaceOnUse" x1="911" y1="380" x2="681" y2="235"><stop offset="0" stop-color="#2f8ec4"/><stop offset=".45" stop-color="#2c86ba"/><stop offset=".62" stop-color="#2a7caa"/><stop offset=".8" stop-color="#28759f"/><stop offset="1" stop-color="#256e97"/></linearGradient>
<linearGradient id="gFLs" gradientUnits="userSpaceOnUse" x1="470" y1="0" x2="670" y2="0"><stop offset="0" stop-color="#45c1ff"/><stop offset="1" stop-color="#3eb3f2"/></linearGradient>
<linearGradient id="gFRs" gradientUnits="userSpaceOnUse" x1="871" y1="0" x2="670" y2="0"><stop offset="0" stop-color="#42bcfb"/><stop offset="1" stop-color="#3eb1ee"/></linearGradient>
</defs>
<polygon points="424.5,233 480,228.6 550,224 577.5,223.5 600,225.6 627.5,230 647.5,229.4 626,231.2 607.5,238.8 590,248.3 571,260 536,284 536,284 438.3,291.6" fill="url(#gBL)" stroke="url(#gBL)" stroke-width=".8" stroke-linejoin="round" />
<polygon points="916.1,233 860.6,228.6 790.6,224 763.1,223.5 740.6,225.6 713.1,230 693.1,229.4 714.6,231.2 733.1,238.8 750.6,248.3 769.6,260 804.6,284 804.6,284 902.3,291.6" fill="url(#gBR)" stroke="url(#gBR)" stroke-width=".8" stroke-linejoin="round" />
<polygon points="424.5,233 445,225.5 465,219.5 500,215 550,211.2 590,209.2 615,209.2 645,211.8 660,213.6 670.3,215.5 670.3,220.6 647.5,229.4 627.5,230 600,225.6 577.5,223.5 550,224 480,228.6 424.5,233" fill="url(#gTL)" stroke="url(#gTL)" stroke-width=".8" stroke-linejoin="round" />
<polygon points="916.1,233 895.6,225.5 875.6,219.5 840.6,215 790.6,211.2 750.6,209.2 725.6,209.2 695.6,211.8 680.6,213.6 670.3,215.5 670.3,220.6 693.1,229.4 713.1,230 740.6,225.6 763.1,223.5 790.6,224 860.6,228.6 916.1,233" fill="url(#gTR)" stroke="url(#gTR)" stroke-width=".8" stroke-linejoin="round" />
<polygon points="425,367.5 480,326 536,284 571,260 590,248.3 607.5,238.8 626,231.2 647.5,229.4 670.3,237.5 670.3,245.8 640,262.7 610,279.4 582.8,297 545.2,325.1 503.8,356 468.3,382.6" fill="url(#gFLt)" stroke="url(#gFLt)" stroke-width=".8" stroke-linejoin="round" />
<polygon points="915.6,367.5 860.6,326 804.6,284 769.6,260 750.6,248.3 733.1,238.8 714.6,231.2 693.1,229.4 670.3,237.5 670.3,245.8 700.6,262.7 730.6,279.4 757.8,297 795.4,325.1 836.8,356 872.3,382.6" fill="url(#gFRt)" stroke="url(#gFRt)" stroke-width=".8" stroke-linejoin="round" />
<polygon points="468.3,382.6 503.8,356 545.2,325.1 582.8,297 610,279.4 640,262.7 670.3,245.8 670.3,304 655,311.5 630,325 590.9,350.6 555,378.2 480.8,432.7" fill="url(#gFLs)" stroke="url(#gFLs)" stroke-width=".8" stroke-linejoin="round" />
<polygon points="872.3,382.6 836.8,356 795.4,325.1 757.8,297 730.6,279.4 700.6,262.7 670.3,245.8 670.3,304 685.6,311.5 710.6,325 749.7,350.6 785.6,378.2 859.8,432.7" fill="url(#gFRs)" stroke="url(#gFRs)" stroke-width=".8" stroke-linejoin="round" />
<polygon points="425,367.5 468.3,382.6 480.8,432.7 438.2,418.3" fill="#1f5672" stroke="#1f5672" stroke-width=".8" stroke-linejoin="round" />
<polygon points="915.6,367.5 872.3,382.6 859.8,432.7 902.4,418.3" fill="#246c96" stroke="#246c96" stroke-width=".8" stroke-linejoin="round" />
<polygon points="670.3,220.6 647.5,229.4 670.3,237.5 693.1,229.4" fill="#3cadeb" stroke="#3cadeb" stroke-width=".8" stroke-linejoin="round" />
<path d="M450 401l3.500-4.500 4 4.500-4 4z" fill="#0c9c0c" stroke="#075c07" stroke-width=".6"/>
<path d="M890.600 400.500l-3.500-4.500-4 4.500 4 4z" fill="#0c9c0c" stroke="#075c07" stroke-width=".6"/>
<path d="M331 391V354.500" stroke="#00a000" stroke-width="2"/><path d="M331 356l3 3.600-3 3.600-3-3.600z" fill="#00a000"/>
<path d="M331 391L304.500 400" stroke="#f00000" stroke-width="2"/><path d="M303.500 400.200l3-3.200 4.500 .5-2.500 3.300z" fill="#f00000"/>
<path d="M331 391L357.500 400" stroke="#0096ff" stroke-width="2"/><path d="M358.500 400.200l-3-3.200-4.500 .5 2.500 3.300z" fill="#0096ff"/>
</svg>
<div class="t" style="left:323px;top:335px;font-size:16px;color:#00a000;transform:scaleX(0.703);transform-origin:0 50%;">Y</div>
<div class="t" style="left:295px;top:382px;font-size:16px;color:#f00000;transform:scaleX(0.767);transform-origin:0 50%;">Z</div>
<div class="t" style="left:360px;top:406px;font-size:16px;color:#0096ff;transform:scaleX(0.656);transform-origin:0 50%;">X</div>
<div class="t" style="left:1011px;top:181px;font-size:13px;color:#ff0000;transform:scaleX(1.034);transform-origin:0 50%;">X 731.5 倍率</div>
<div class="a" style="left:1094px;top:175px;width:17px;height:276px;background:#f0f0f0"></div>
<div class="a" style="left:1095px;top:222px;width:15px;height:211px;border:1px solid #9a9a9a;border-radius:2px;background:linear-gradient(90deg,#f4f4f4 0,#e6e6e6 45%,#d2d2d2 55%,#dcdcdc 100%)"></div>
<svg style="left:1094px;top:175px" width="17" height="276" viewBox="0 0 17 276"><path d="M5 11.500l3.500-4 3.500 4z" fill="#505050"/><path d="M5 263.500l3.500 4 3.500-4z" fill="#505050"/><path d="M5.500 150.500h6M5.500 152.500h6M5.500 154.500h6" stroke="#606060" stroke-width="1"/></svg>
<div class="a" style="left:271px;top:451px;width:840px;height:17px;background:#f0f0f0"></div>
<div class="a" style="left:402px;top:452px;width:578px;height:15px;border:1px solid #9a9a9a;border-radius:2px;background:linear-gradient(#f4f4f4 0,#e6e6e6 45%,#d2d2d2 55%,#dcdcdc 100%)"></div>
<svg style="left:271px;top:451px" width="840" height="17" viewBox="0 0 840 17"><path d="M11 5l-4 3.500 4 3.500z" fill="#505050"/><path d="M813 5l4 3.500-4 3.500z" fill="#505050"/><path d="M416.500 5.500v6M418.500 5.500v6M420.500 5.500v6" stroke="#606060" stroke-width="1"/></svg>
<div class="a" style="left:271px;top:468px;width:840px;height:4px;background:#fff"></div>
<div class="a" style="left:271px;top:468px;width:840px;height:195px;background:#fff"></div>
<div class="a" style="left:271px;top:492px;width:838px;height:171px;border:1px solid #8e8e8e;background:#fff"></div>
<div class="a" style="left:275px;top:496px;width:831px;height:165px;border:1px solid #9a9a9a;background:#fff"></div>
<div class="a" style="left:316px;top:474px;width:77px;height:18px;border:1px solid #8e8e8e;border-bottom:none;background:linear-gradient(#f4f4f4,#e4e4e4)"></div>
<div class="a" style="left:271px;top:472px;width:46px;height:21px;border:1px solid #8e8e8e;border-bottom:none;background:#fff"></div>
<div class="t" style="left:279px;top:475px;letter-spacing:-1.00px;">節点</div>
<div class="t" style="left:321px;top:477px;letter-spacing:0.32px;">フレーム要素</div>
<div class="a" style="left:277px;top:497px;width:352px;height:21px;background:#f0f0f0"></div>
<div class="a" style="left:277px;top:518px;width:352px;height:21px;background:#ffccff"></div>
<div class="a" style="left:342px;top:518px;width:90px;height:21px;background:#3399ff;border:1px dotted #c8641e"></div>
<div class="a" style="left:277px;top:497px;width:1px;height:127px;background:#c4c4c4"></div><div class="a" style="left:341px;top:497px;width:1px;height:127px;background:#c4c4c4"></div><div class="a" style="left:431px;top:497px;width:1px;height:127px;background:#c4c4c4"></div><div class="a" style="left:495px;top:497px;width:1px;height:127px;background:#c4c4c4"></div><div class="a" style="left:564px;top:497px;width:1px;height:127px;background:#c4c4c4"></div><div class="a" style="left:629px;top:497px;width:1px;height:127px;background:#c4c4c4"></div><div class="a" style="left:277px;top:497px;width:353px;height:1px;background:#c4c4c4"></div><div class="a" style="left:277px;top:518px;width:353px;height:1px;background:#c4c4c4"></div><div class="a" style="left:277px;top:539px;width:353px;height:1px;background:#c4c4c4"></div><div class="a" style="left:277px;top:560px;width:353px;height:1px;background:#c4c4c4"></div><div class="a" style="left:277px;top:581px;width:353px;height:1px;background:#c4c4c4"></div><div class="a" style="left:277px;top:602px;width:353px;height:1px;background:#c4c4c4"></div><div class="a" style="left:277px;top:623px;width:353px;height:1px;background:#c4c4c4"></div>
<div class="t" style="left:281px;top:500px;letter-spacing:-1.00px;">名称</div>
<div class="t" style="left:346px;top:500px;letter-spacing:-1.55px;">ケース名</div>
<div class="t" style="left:436px;top:500px;font-size:11px;transform:scaleX(0.901);transform-origin:0 50%;">δX (mm)</div>
<div class="t" style="left:500px;top:500px;font-size:11px;transform:scaleX(0.905);transform-origin:0 50%;">δY (mm)</div>
<div class="t" style="left:568px;top:500px;font-size:11px;transform:scaleX(0.914);transform-origin:0 50%;">δZ (mm)</div>
<div class="t" style="left:281px;top:521px;font-size:11px;">1</div>
<div class="t" style="left:346px;top:521px;color:#fff;transform:scaleX(0.968);transform-origin:0 50%;">死荷重 (St.)</div>
<div class="t" style="left:436px;top:521px;font-size:11px;transform:scaleX(0.981);transform-origin:0 50%;">0.00000</div>
<div class="t" style="left:500px;top:521px;font-size:11px;transform:scaleX(0.981);transform-origin:0 50%;">0.00000</div>
<div class="t" style="left:568px;top:521px;font-size:11px;transform:scaleX(0.981);transform-origin:0 50%;">0.00000</div>
<div class="t" style="left:281px;top:542px;font-size:11px;">2</div>
<div class="t" style="left:346px;top:542px;transform:scaleX(0.968);transform-origin:0 50%;">死荷重 (St.)</div>
<div class="t" style="left:436px;top:542px;font-size:11px;transform:scaleX(0.981);transform-origin:0 50%;">0.00000</div>
<div class="t" style="left:500px;top:542px;font-size:11px;transform:scaleX(0.990);transform-origin:0 50%;">-3.28071</div>
<div class="t" style="left:568px;top:542px;font-size:11px;transform:scaleX(0.981);transform-origin:0 50%;">0.00000</div>
<div class="t" style="left:281px;top:563px;font-size:11px;">3</div>
<div class="t" style="left:346px;top:563px;transform:scaleX(0.968);transform-origin:0 50%;">死荷重 (St.)</div>
<div class="t" style="left:436px;top:563px;font-size:11px;transform:scaleX(0.981);transform-origin:0 50%;">0.00000</div>
<div class="t" style="left:500px;top:563px;font-size:11px;transform:scaleX(0.990);transform-origin:0 50%;">-3.28071</div>
<div class="t" style="left:568px;top:563px;font-size:11px;transform:scaleX(0.981);transform-origin:0 50%;">0.00000</div>
<div class="t" style="left:281px;top:584px;font-size:11px;">4</div>
<div class="t" style="left:346px;top:584px;transform:scaleX(0.968);transform-origin:0 50%;">死荷重 (St.)</div>
<div class="t" style="left:436px;top:584px;font-size:11px;transform:scaleX(0.981);transform-origin:0 50%;">0.00000</div>
<div class="t" style="left:500px;top:584px;font-size:11px;transform:scaleX(0.990);transform-origin:0 50%;">-3.28071</div>
<div class="t" style="left:568px;top:584px;font-size:11px;transform:scaleX(0.981);transform-origin:0 50%;">0.00000</div>
<div class="t" style="left:281px;top:605px;font-size:11px;">5</div>
<div class="t" style="left:346px;top:605px;transform:scaleX(0.968);transform-origin:0 50%;">死荷重 (St.)</div>
<div class="t" style="left:436px;top:605px;font-size:11px;transform:scaleX(0.981);transform-origin:0 50%;">0.00000</div>
<div class="t" style="left:500px;top:605px;font-size:11px;transform:scaleX(0.990);transform-origin:0 50%;">-3.28071</div>
<div class="t" style="left:568px;top:605px;font-size:11px;transform:scaleX(0.981);transform-origin:0 50%;">0.00000</div>
<div class="a" style="left:490px;top:490px;width:77px;height:142px;border:2px solid #ee1c25"></div>
<div class="a" style="left:266px;top:663px;width:845px;height:21px;background:#f0eeee;border-top:1px solid #d8d8d8"></div>
<div class="a" style="left:521px;top:666px;width:1px;height:16px;background:#d0d0d0"></div>
<div class="t" style="left:273px;top:667px;transform:scaleX(0.892);transform-origin:0 50%;">x=11.665m, y=0.000m, z=14.354m</div>
<div class="a" style="left:5px;top:30px;width:1107px;height:655px;border:1px solid #34508c;pointer-events:none"></div>
<div class="a" style="left:10px;top:10px;width:36px;height:37px;border-radius:50%;background:radial-gradient(circle at 50% 30%,#ffffff 0,#f6f6f6 45%,#d6d6d6 78%,#b4b4b4 100%);box-shadow:0 1px 2px rgba(0,0,0,.4),inset 0 0 0 1px rgba(255,255,255,.85)">
  <div class="a" style="left:6px;top:7px;width:24px;height:24px;border-radius:2px 4px 2px 2px;background:#3a0602;overflow:hidden">
   <div class="a" style="left:-3px;top:5px;width:27px;height:30px;border-radius:50%;background:radial-gradient(circle at 45% 45%,#fbe0b4,#f2c092 60%,#e29a84)"></div>
   <div class="a" style="left:-1px;top:-3px;width:8px;height:11px;background:linear-gradient(90deg,#9a9a9a,#e4e4e4);transform:rotate(-38deg);transform-origin:0 100%;border-radius:0 0 3px 0"></div>
   <div class="a" style="left:4px;top:7px;width:4px;height:3px;background:#ffe800;border-radius:1px"></div>
   <div class="a" style="left:1px;top:11px;width:24px;font:italic bold 13px/13px 'Liberation Sans',sans-serif;color:#1c98cc;transform:scaleX(1.120);transform-origin:0 0;text-shadow:0 0 .5px #1c98cc">ES</div>
  </div>
  <div class="a" style="left:0;top:18px;width:36px;height:19px;border-radius:0 0 18px 18px;background:linear-gradient(rgba(150,150,150,.28),rgba(240,240,240,.12))"></div>
 </div>
<div id="winedge"></div>
</div>
</body>
</html>
